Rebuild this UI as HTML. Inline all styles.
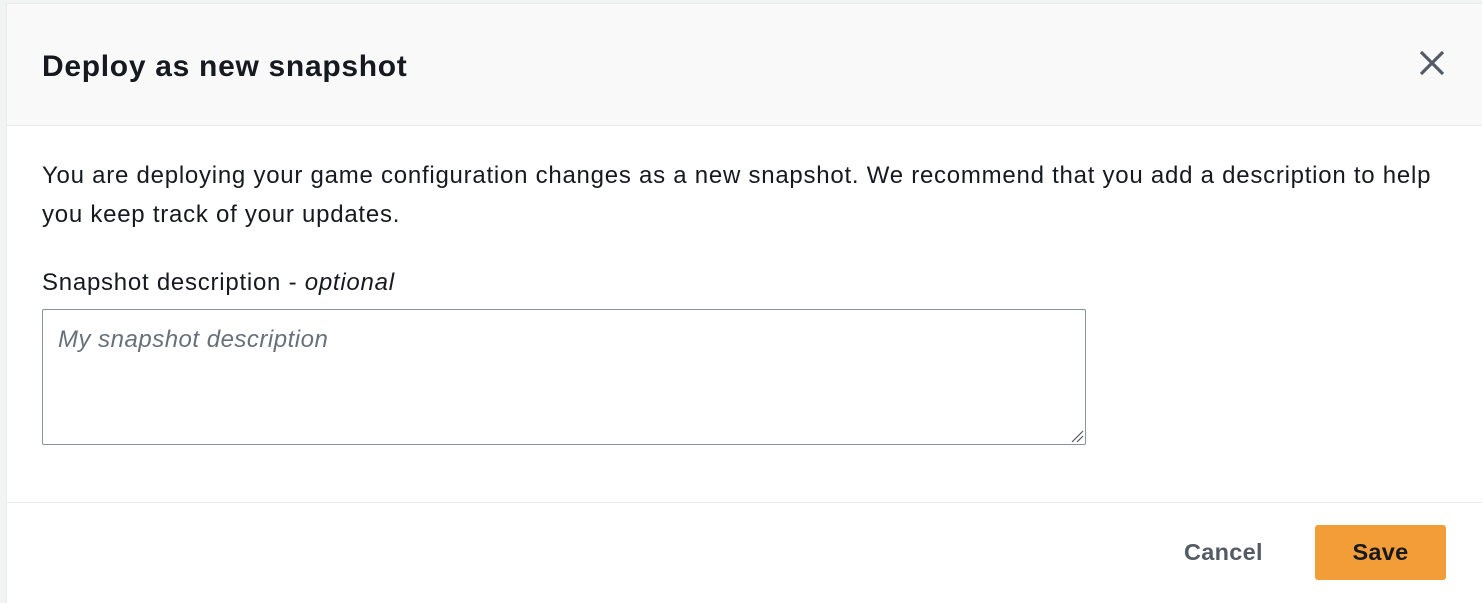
<!DOCTYPE html>
<html><head><style>
body{margin:0;width:1482px;height:602px;background:#f2f3f3;font-family:"Liberation Sans",sans-serif;overflow:hidden;position:relative}
.modal{position:absolute;left:6px;top:3px;width:1476px;height:599px;background:#fff;border-left:1px solid #e9ebed;border-top:1px solid #e9ebed}
.hdr{height:121px;background:#f9f9f9;border-bottom:1px solid #e9ebed;position:relative}
h1{margin:0;position:absolute;left:35px;top:46px;font-size:30px;font-weight:bold;color:#16191f;letter-spacing:0.7px}
.x{position:absolute;left:1412px;top:46px}
p{position:absolute;left:35px;top:152px;margin:0;width:1410px;font-size:24px;line-height:39px;color:#16191f;letter-spacing:0.75px}
.lbl{position:absolute;left:35px;top:265px;font-size:24px;color:#16191f;letter-spacing:0.75px}
.ta{position:absolute;left:35px;top:305px;width:1042px;height:134px;border:1px solid #879596;border-radius:2px}
.ph{position:absolute;left:15px;top:16px;font-size:24px;font-style:italic;color:#687078;letter-spacing:0.5px}
.ft{position:absolute;left:0;top:498px;width:100%;border-top:1px solid #e9ebed}
.cancel{position:absolute;left:1177px;top:535px;font-size:23.5px;font-weight:bold;color:#545b64;letter-spacing:0.3px}
.save{position:absolute;left:1308px;top:521px;width:131px;height:55px;background:#f29d38;border-radius:3px;font-size:23.5px;font-weight:bold;color:#16191f;text-align:center;line-height:55px;letter-spacing:0.3px}
</style></head><body>
<div class="modal">
<div class="hdr"><h1>Deploy as new snapshot</h1>
<svg class="x" width="26" height="26" viewBox="0 0 26 26"><path d="M2 2L24 24M24 2L2 24" stroke="#545b64" stroke-width="3.2"/></svg></div>
<p>You are deploying your game configuration changes as a new snapshot. We recommend that you add a description to help you keep track of your updates.</p>
<div class="lbl">Snapshot description - <i>optional</i></div>
<div class="ta"><div class="ph">My snapshot description</div>
<svg style="position:absolute;right:1px;bottom:1px" width="14" height="14"><path d="M2 13L13 2M7 13L13 7" stroke="#555" stroke-width="1.2"/></svg></div>
<div class="ft"></div>
<div class="cancel">Cancel</div>
<div class="save">Save</div>
</div>
</body></html>
